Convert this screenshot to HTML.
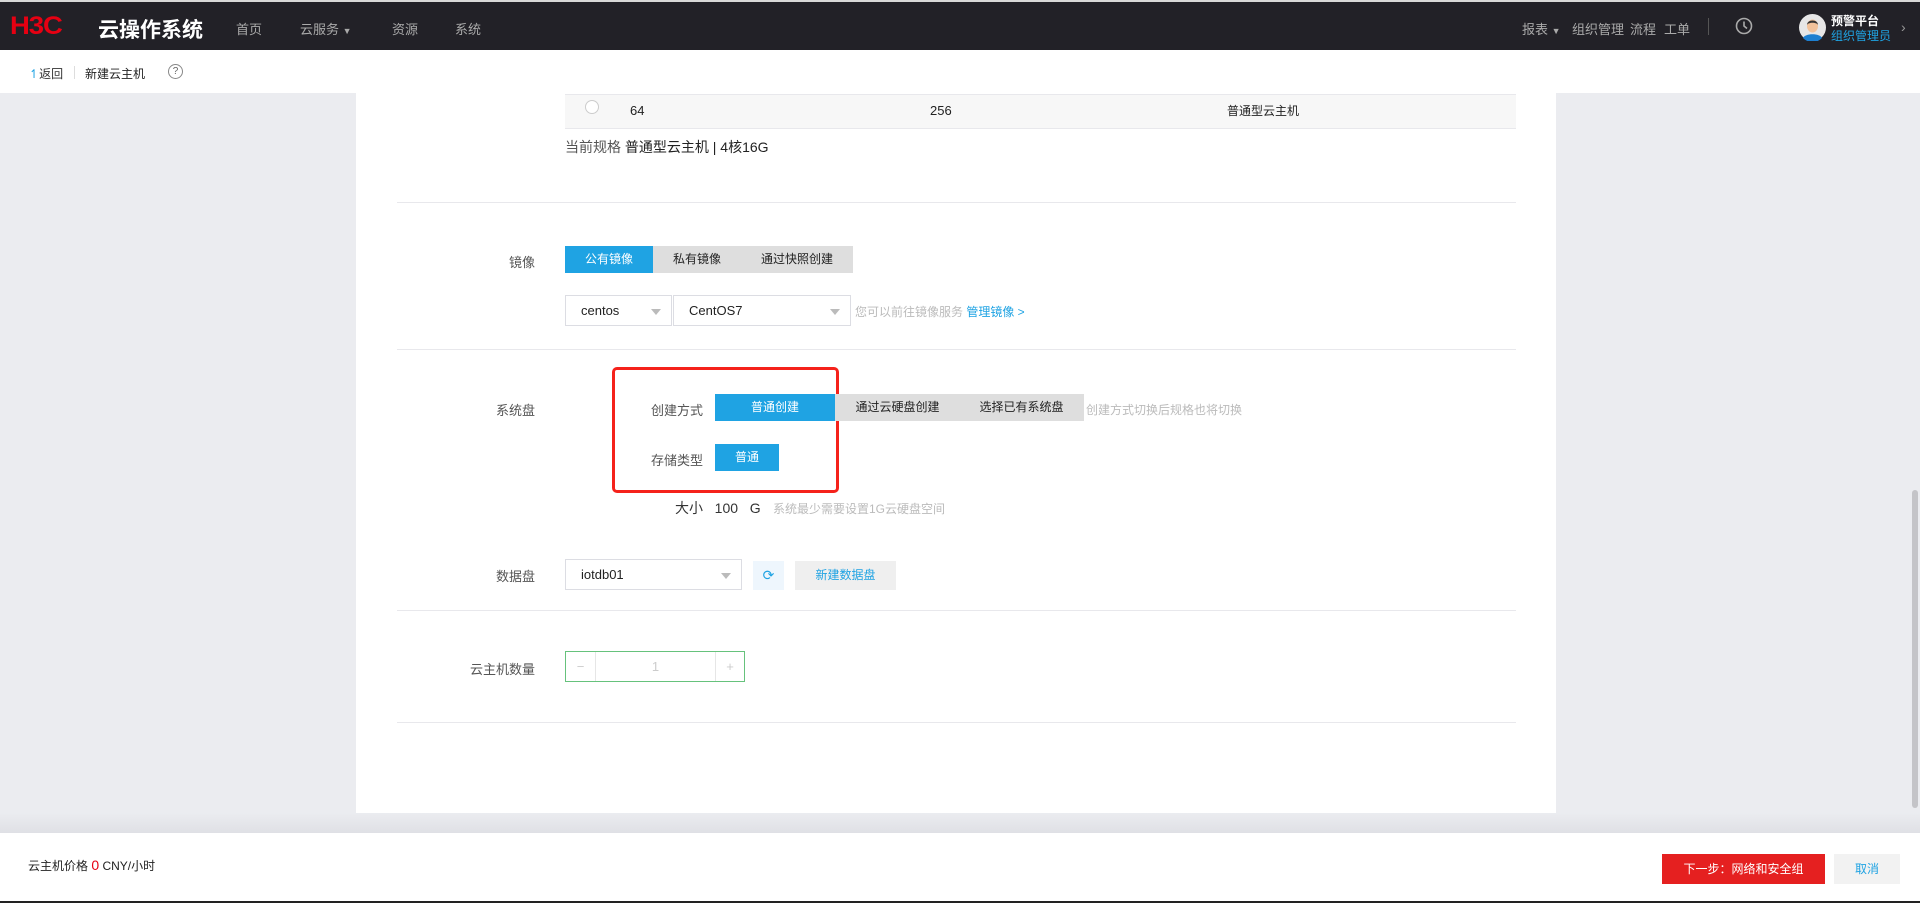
<!DOCTYPE html>
<html><head><meta charset="utf-8"><style>
*{box-sizing:border-box;margin:0;padding:0}
body{width:1920px;height:903px;overflow:hidden;background:#ebecf0;font-family:"Liberation Sans","Noto Sans CJK SC",sans-serif;font-size:13px;color:#333;position:relative}
.abs{position:absolute}
.top{left:0;top:0;width:1920px;height:50px;background:#222127;border-top:2px solid #d8d8d8}
.nav{color:#aaa;font-size:13px;top:17px}
.sub{left:0;top:50px;width:1920px;height:43px;background:#fff}
.panel{left:356px;top:93px;width:1200px;height:720px;background:#fff}
.hr{height:1px;background:#e8e8ec;left:397px;width:1119px}
.lbl{color:#555;font-size:13px;text-align:right;width:140px;left:395px}
.btn{height:27px;line-height:27px;text-align:center;font-size:12px}
.blue{background:#1fa3e3;color:#fff}
.gray{background:#dedede;color:#222}
.sel{border:1px solid #dcdde3;background:#fff;height:31px;line-height:29px;padding-left:15px;font-size:13px;color:#222}
.tri{position:absolute;right:10px;top:13px;width:0;height:0;border-left:5px solid transparent;border-right:5px solid transparent;border-top:6px solid #bbb}
.hint{color:#bbb;font-size:12px}
.foot{left:0;top:833px;width:1920px;height:70px;background:#fff;border-bottom:2px solid #222}
</style></head><body>
<div class="abs top">
  <div class="abs" style="left:10px;top:12px;color:#e60012;font-size:25px;line-height:25px;font-weight:bold;letter-spacing:-1px;transform:scaleX(1.1);transform-origin:left">H3C</div>
  <div class="abs" style="left:98px;top:12px;color:#fff;font-size:21px;font-weight:bold">云操作系统</div>
  <div class="abs nav" style="left:236px">首页</div>
  <div class="abs nav" style="left:300px">云服务 <span style="font-size:9px">▼</span></div>
  <div class="abs nav" style="left:392px">资源</div>
  <div class="abs nav" style="left:455px">系统</div>
  <div class="abs nav" style="left:1522px">报表 <span style="font-size:9px">▼</span></div>
  <div class="abs nav" style="left:1572px">组织管理</div>
  <div class="abs nav" style="left:1630px">流程</div>
  <div class="abs nav" style="left:1664px">工单</div>
  <div class="abs" style="left:1708px;top:16px;width:1px;height:17px;background:#555"></div>
  <svg class="abs" style="left:1735px;top:15px" width="18" height="18" viewBox="0 0 18 18"><circle cx="9" cy="9" r="7.5" fill="none" stroke="#aaa" stroke-width="1.6"/><path d="M9 4.5V9l3 2.5" fill="none" stroke="#aaa" stroke-width="1.6"/></svg>
  <svg class="abs" style="left:1799px;top:12px" width="27" height="27" viewBox="0 0 27 27"><circle cx="13.5" cy="13.5" r="13.5" fill="#e6e6e6"/><path d="M4 24c2-5 17-5 19 0a13 13 0 0 1-19 0z" fill="#1d7fd0"/><ellipse cx="13.5" cy="12" rx="5.5" ry="6.5" fill="#f2c29a"/><path d="M8 11c0-6 11-6 11 0c-1-3-10-3-11 0z" fill="#333"/></svg>
  <div class="abs" style="left:1831px;top:10px;color:#fff;font-size:12px;font-weight:bold">预警平台</div>
  <div class="abs" style="left:1831px;top:25px;color:#1fa3e3;font-size:12px">组织管理员</div>
  <div class="abs" style="left:1901px;top:17px;color:#999;font-size:14px">›</div>
</div>
<div class="abs sub">
  <div class="abs" style="left:29px;top:15px;font-size:12px;color:#333"><span style="color:#1fa3e3">↿</span>返回</div>
  <div class="abs" style="left:74px;top:16px;width:1px;height:13px;background:#ddd"></div>
  <div class="abs" style="left:85px;top:15px;font-size:12px;color:#222">新建云主机</div>
  <div class="abs" style="left:168px;top:14px;width:15px;height:15px;border:1px solid #888;border-radius:50%;font-size:10px;line-height:13px;text-align:center;color:#666">?</div>
</div>
<div class="abs panel"></div>
<div class="abs" style="left:565px;top:94px;width:951px;height:35px;background:#f7f7f7;border-top:1px solid #e8e8ec;border-bottom:1px solid #e8e8ec"></div>
<div class="abs" style="left:585px;top:100px;width:14px;height:14px;border:1px solid #ccc;border-radius:50%;background:#fff"></div>
<div class="abs" style="left:630px;top:103px;color:#222">64</div>
<div class="abs" style="left:930px;top:103px;color:#222">256</div>
<div class="abs" style="left:1227px;top:102px;color:#222;font-size:12px">普通型云主机</div>
<div class="abs" style="left:565px;top:137px;font-size:14px;color:#222"><span style="color:#555">当前规格</span> 普通型云主机 | 4核16G</div>
<div class="abs hr" style="top:202px"></div>
<div class="abs lbl" style="top:252px">镜像</div>
<div class="abs btn blue" style="left:565px;top:246px;width:88px">公有镜像</div>
<div class="abs btn gray" style="left:653px;top:246px;width:88px">私有镜像</div>
<div class="abs btn gray" style="left:741px;top:246px;width:112px">通过快照创建</div>
<div class="abs sel" style="left:565px;top:295px;width:107px">centos<span class="tri"></span></div>
<div class="abs sel" style="left:673px;top:295px;width:178px">CentOS7<span class="tri"></span></div>
<div class="abs hint" style="left:855px;top:303px">您可以前往镜像服务 <span style="color:#1fa3e3">管理镜像 &gt;</span></div>
<div class="abs hr" style="top:349px"></div>
<div class="abs lbl" style="top:400px">系统盘</div>
<div class="abs" style="left:612px;top:367px;width:227px;height:126px;border:3px solid #f5221b;border-radius:5px"></div>
<div class="abs" style="left:640px;top:400px;color:#555;font-size:13px;width:63px;text-align:right">创建方式</div>
<div class="abs btn blue" style="left:715px;top:394px;width:120px">普通创建</div>
<div class="abs btn gray" style="left:835px;top:394px;width:249px;word-spacing:0"><span style="margin-right:40px">通过云硬盘创建</span>选择已有系统盘</div>
<div class="abs hint" style="left:1086px;top:401px">创建方式切换后规格也将切换</div>
<div class="abs" style="left:640px;top:450px;color:#555;font-size:13px;width:63px;text-align:right">存储类型</div>
<div class="abs btn blue" style="left:715px;top:444px;width:64px">普通</div>
<div class="abs" style="left:675px;top:498px;color:#333;font-size:14px">大小&nbsp;&nbsp; 100&nbsp;&nbsp; G</div>
<div class="abs hint" style="left:643px;top:500px;margin-left:130px">系统最少需要设置1G云硬盘空间</div>
<div class="abs lbl" style="top:566px">数据盘</div>
<div class="abs sel" style="left:565px;top:559px;width:177px">iotdb01<span class="tri"></span></div>
<div class="abs" style="left:753px;top:561px;width:31px;height:29px;background:#eef6fd;color:#1fa3e3;text-align:center;line-height:29px;font-size:14px">⟳</div>
<div class="abs" style="left:795px;top:561px;width:101px;height:29px;background:#efefef;color:#1fa3e3;text-align:center;line-height:29px;font-size:12px">新建数据盘</div>
<div class="abs hr" style="top:610px"></div>
<div class="abs lbl" style="top:659px">云主机数量</div>
<div class="abs" style="left:565px;top:651px;width:180px;height:31px;border:1px solid #66c27c;background:#fff">
 <div class="abs" style="left:0;top:0;width:30px;height:29px;border-right:1px solid #e6e6e6;color:#ccc;text-align:center;line-height:29px">−</div>
 <div class="abs" style="left:30px;top:0;width:119px;height:29px;color:#ccc;text-align:center;line-height:29px">1</div>
 <div class="abs" style="left:149px;top:0;width:29px;height:29px;border-left:1px solid #e6e6e6;color:#ccc;text-align:center;line-height:29px">+</div>
</div>
<div class="abs hr" style="top:722px"></div>
<div class="abs" style="left:1912px;top:490px;width:6px;height:318px;background:#c4c4c8;border-radius:3px"></div>
<div class="abs" style="left:0;top:813px;width:1920px;height:20px;background:linear-gradient(#ebecf0,#dfe0e5)"></div>
<div class="abs foot">
  <div class="abs" style="left:28px;top:24px;font-size:12px;color:#222">云主机价格 <span style="color:#e60012;font-size:14px">0</span> CNY/小时</div>
  <div class="abs" style="left:1662px;top:21px;width:163px;height:30px;background:#e52020;color:#fff;text-align:center;line-height:30px;font-size:12px">下一步：网络和安全组</div>
  <div class="abs" style="left:1834px;top:21px;width:66px;height:30px;background:#f2f2f2;color:#1fa3e3;text-align:center;line-height:30px;font-size:12px">取消</div>
</div>
</body></html>
